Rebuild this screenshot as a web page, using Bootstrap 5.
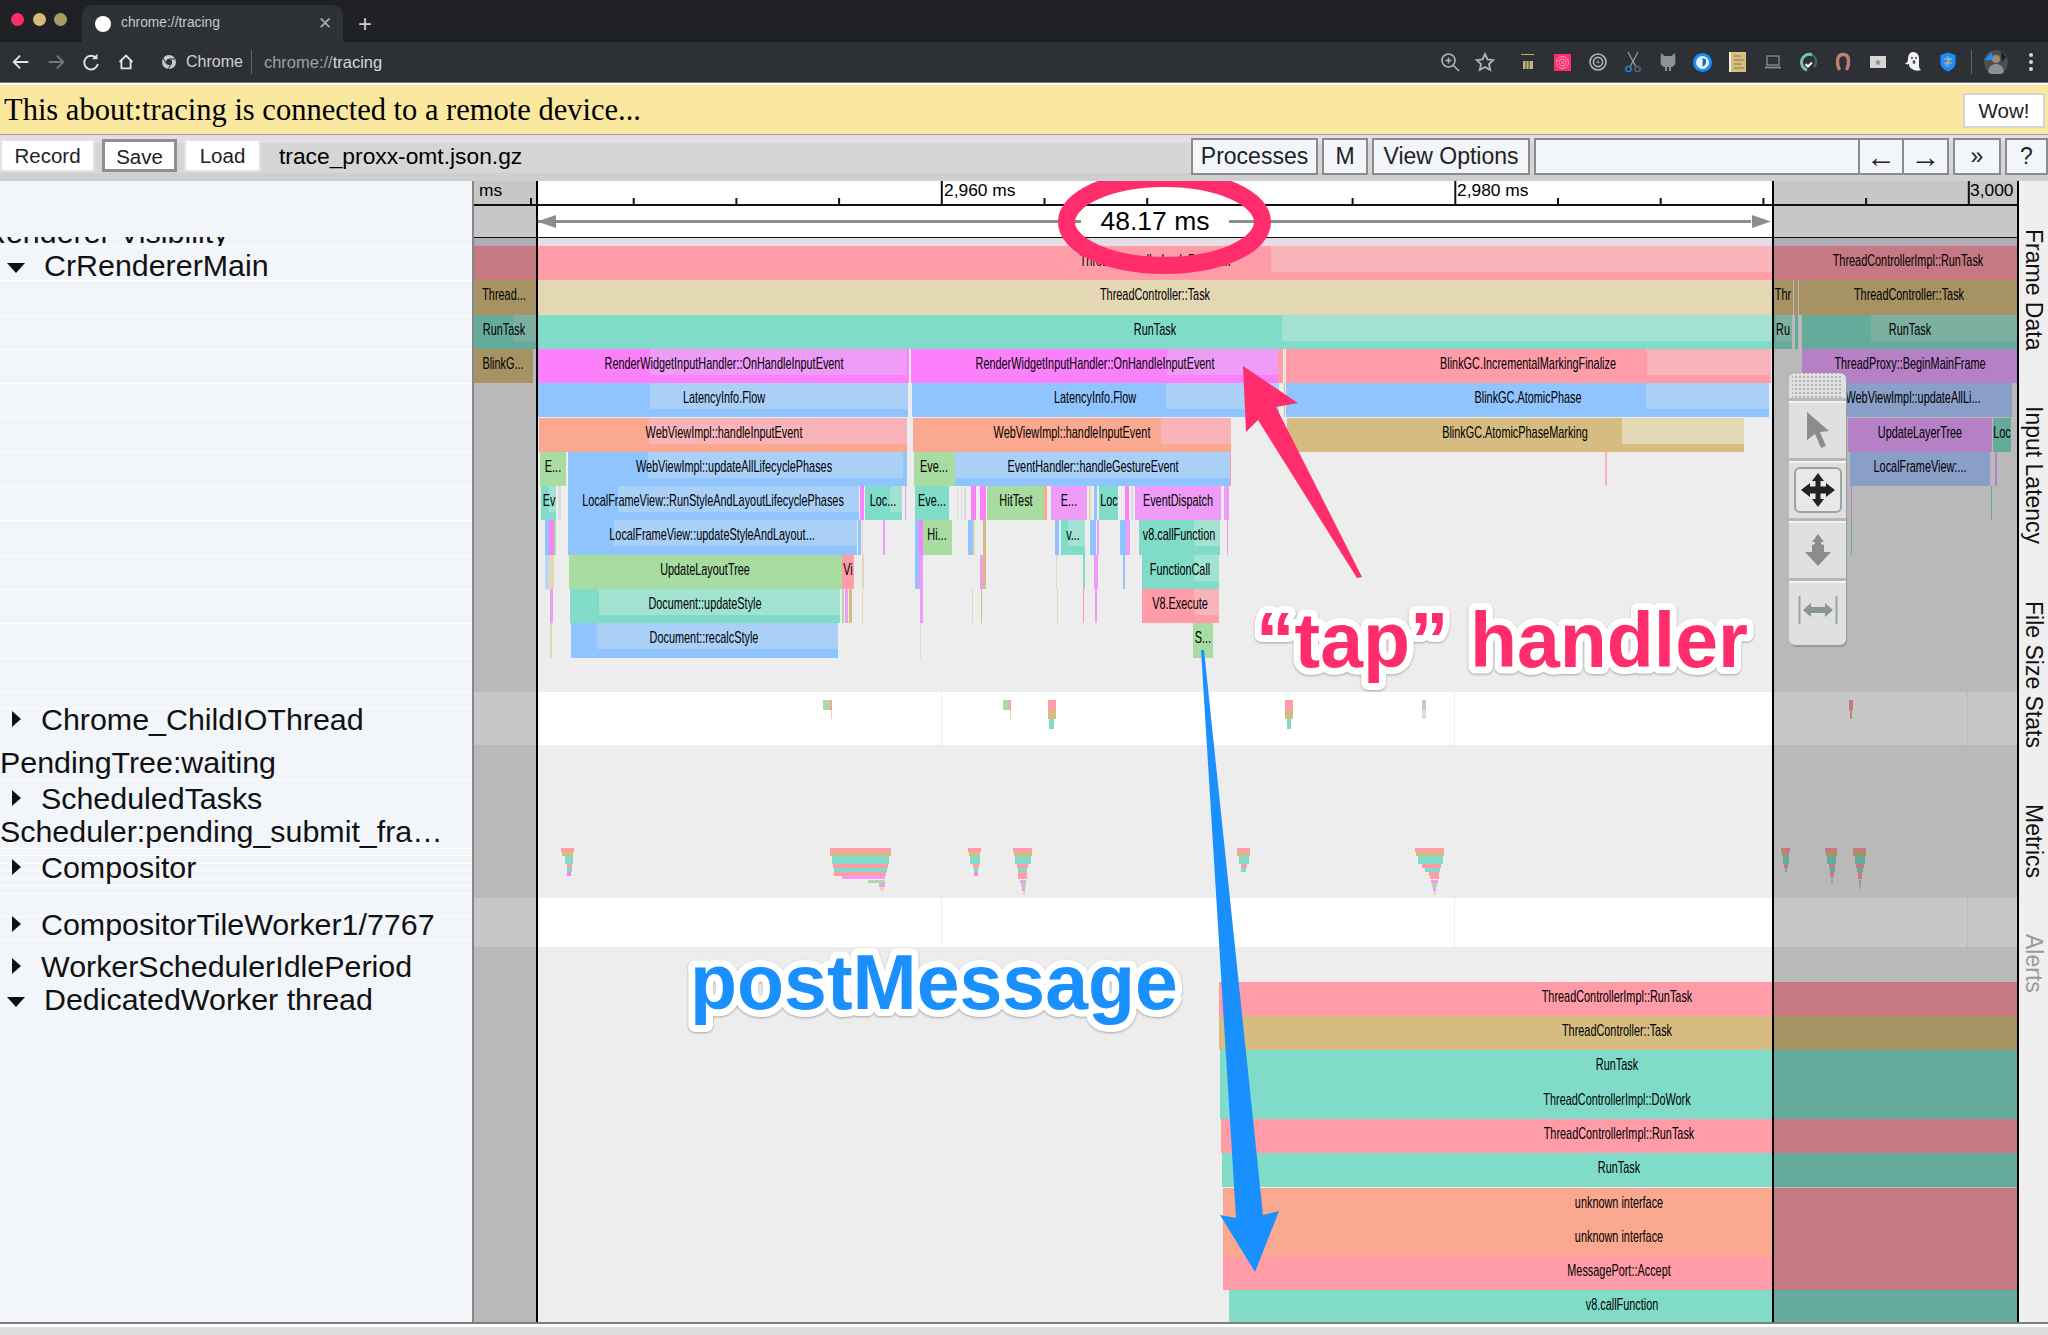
<!DOCTYPE html>
<html lang="en">
<head>
  <meta charset="UTF-8" />
  <title>chrome://tracing</title>
  <link href="https://cdn.jsdelivr.net/npm/bootstrap@5.3.3/dist/css/bootstrap.min.css" rel="stylesheet">
  <style>
    html, body { height: 100%; }
    body { margin: 0; width: 2048px; height: 1335px; overflow: hidden; font-family: "Liberation Sans", Arial, sans-serif; background: #ddd; color: #000; }

    /* browser chrome */
    .cr-tabs { height: 42px; background: #202124; }
    .cr-light { width: 13px; height: 13px; border-radius: 50%; margin-top: 13px; }
    .cr-l1 { background: #fb2f6a; margin-left: 11px; }
    .cr-l2 { background: #d6bc7a; margin-left: 9px; }
    .cr-l3 { background: #a89a6a; margin-left: 8px; }
    .cr-tab { width: 261px; height: 37px; margin-top: 5px; margin-left: 15px; background: #2e3135; border-radius: 10px 10px 0 0; color: #c8c8c8; font-size: 13.8px; padding-left: 13px; }
    .cr-fav { width: 16px; height: 16px; border-radius: 50%; background: #fff; margin-right: 10px; }
    .cr-close { margin-left: auto; margin-right: 11px; color: #aaa; font-size: 17px; }
    .cr-plus { margin: 5px 0 0 15px; color: #ccc; font-size: 24px; line-height: 37px; }
    .cr-bar { height: 41px; background: #2d3034; border-bottom: 1px solid #777; color: #d0d0d0; font-size: 16px; padding-left: 3px; }
    .cr-cell { width: 35px; height: 40px; flex: none; }
    .cr-sep { width: 1px; height: 24px; background: #666; }
    .cr-gap { margin: 0 6px; }
    .cr-logo { margin-left: 8px; }
    .cr-url { color: #a0a0a0; font-size: 16.5px; }
    .cr-url b { color: #d8d8d8; font-weight: 400; }
    .cr-spacer { height: 2px; background: #fff; }

    /* about:tracing */
    .tv-note { height: 50px; background: #fbe89f; border-bottom: 1px solid #9e9e9e; padding: 0 3px 0 4px; font-family: "Liberation Serif", "Times New Roman", serif; font-size: 30.5px; }
    .tv-note-text { margin-top: 2px; line-height: 46px; }
    .tv-wow { width: 82px; height: 35px; padding: 0; border-radius: 0; background: #fff; border: 2px solid #d4d4d4; font: 20.5px "Liberation Sans", Arial, sans-serif; color: #222; margin-top: 8px; }
    .tv-tools { height: 46px; background: linear-gradient(#e6dce6 0 8px, #d6d6d6 8px 38px, #cfcfcf 38px); }
    .tv-btn { height: 33px; padding: 0; border-radius: 0; background: #fff; border: 2px solid #e2e2e2; font-size: 20.5px; color: #222; margin-top: 4px; margin-left: 7px; }
    .tv-btn:first-child { margin-left: 0; }
    .tv-btn:hover, .tv-btn2:hover { background: #fff; color: #222; }
    .tv-save { border: 3px solid #8f8f8f; }
    .tv-file { font-size: 22.8px; margin: 3px 0 0 18px; line-height: 36px; }
    .tv-btn2 { height: 37px; padding: 0; border-radius: 0; background: #f2f5f9; border: 2px solid #8b8b8b; font-size: 23px; color: #222; margin-top: 3px; line-height: 1; }
    .input-group .form-control.tv-search { height: 37px; width: 326px; flex: none; border-radius: 0; background: #f2f5f9; border: 2px solid #8b8b8b; margin-top: 3px; }
    .input-group .tv-btn2 { border-left-width: 1px; border-radius: 0; }
    .tv-arrow { font-size: 30px; font-weight: 700; line-height: 30px; }
    .w-95 { width: 95px; } .w-75b { width: 75px; } .w-77 { width: 77px; } .w-127 { width: 127px; } .w-46 { width: 46px; } .w-158 { width: 158px; } .w-45 { width: 45px; } .w-48 { width: 48px; } .w-43 { width: 43px; }

    .tv-main { height: 1141px; }
    .tv-side { width: 472px; flex: none; background: #f2f5f9; overflow: hidden; padding-top: 56px; }
    .tv-track { display: flow-root; font-size: 30.4px; line-height: 34px; white-space: nowrap; color: #111; }
    .tv-line { border-top: 1px solid #fff; }
    .tv-clip { overflow: hidden; }
    .tv-shift { margin-left: -16px; }
    .tv-lined { background: repeating-linear-gradient(#fff 0 1px, transparent 1px 34.3px); }
    .tv-lined2 { background: repeating-linear-gradient(#fff 0 1px, transparent 1px 7.45px); }
    .tv-tri-r { width: 0; height: 0; border-left: 9px solid #111; border-top: 8.5px solid transparent; border-bottom: 8.5px solid transparent; margin: 0 20px 0 12px; }
    .tv-tri-d { width: 0; height: 0; border-top: 10px solid #111; border-left: 9px solid transparent; border-right: 9px solid transparent; margin: 6px 19px 0 7px; }

    .tv-canvas { width: 1545px; flex: none; overflow: hidden; background: #ededed; }
    .tv-el { position: absolute; }
    .tv-base { z-index: 0; }
    .tv-fbar { z-index: 1; }
    .tv-hl { z-index: 1; }
    .tv-lab { position: absolute; z-index: 2; line-height: 29px; font-size: 17px; white-space: nowrap; color: #000; transform: translateX(-50%) scaleX(.64); }
    .tv-dim { background: rgba(0, 0, 0, .22); z-index: 3; }
    .tv-rule { z-index: 3; }
    .tv-art { position: absolute; left: 0; top: 0; z-index: 4; }
    .tv-art text { font-family: "Liberation Sans", Arial, sans-serif; }
    .tv-big { font-size: 77px; font-weight: 700; paint-order: stroke; stroke: #fff; stroke-width: 14px; stroke-linejoin: round; filter: drop-shadow(0 1px 1px rgba(0, 0, 0, .3)); }

    /* floating mouse mode selector */
    .tv-mode { position: absolute; z-index: 5; left: 1317px; top: 192px; width: 57px; height: 272px; background: #e0e0e0; border-radius: 6px; box-shadow: 1px 2px 1px #999; }
    .tv-grip { height: 25px; margin: 0 3px; background-image: radial-gradient(#b0b0b0 .8px, transparent 1px); background-size: 4px 4px; background-position: 2px 6px; }
    .tv-mode-cell { height: 60px; border-top: 3px solid #b8b8b8; box-shadow: inset 0 2px 0 #f4f4f4; }
    .tv-mode-on { width: 48px; height: 46px; border: 2px solid #9aa69f; border-radius: 6px; background: #e8e8e8; }

    .tv-tabs { width: 31px; flex: none; background: #efefef; border-left: 2px solid #000; padding-top: 48px; gap: 56px; font-size: 23px; line-height: 29px; }
    .tv-tabs span { writing-mode: vertical-rl; white-space: nowrap; color: #111; }
    .tv-tabs .tv-off { color: #999; }
    .tv-foot { height: 13px; background: linear-gradient(#7f7f7f 0 2px, #fff 2px 5px, #ddd 5px); }
  </style>
</head>
<body>

  <div class="cr-tabs d-flex align-items-start">
    <div class="cr-light cr-l1"></div>
    <div class="cr-light cr-l2"></div>
    <div class="cr-light cr-l3"></div>
    <div class="cr-tab d-flex align-items-center">
      <span class="cr-fav"></span>chrome://tracing<span class="cr-close">&#10005;</span>
    </div>
    <div class="cr-plus">+</div>
  </div>

  <div class="cr-bar d-flex align-items-center">
    <div class="cr-cell d-flex align-items-center justify-content-center"><svg width="22" height="22" viewBox="0 0 24 24" fill="none" stroke="#e4e4e4" stroke-width="2"><path d="M20 12H5M11 5l-7 7 7 7"/></svg></div>
    <div class="cr-cell d-flex align-items-center justify-content-center"><svg width="22" height="22" viewBox="0 0 24 24" fill="none" stroke="#777" stroke-width="2"><path d="M4 12h15M13 5l7 7-7 7"/></svg></div>
    <div class="cr-cell d-flex align-items-center justify-content-center"><svg width="22" height="22" viewBox="0 0 24 24" fill="none" stroke="#e4e4e4" stroke-width="2"><path d="M18 8a7.5 7.5 0 1 0 1.5 6"/><path d="M19 3v6h-6" fill="#e4e4e4" stroke="none"/></svg></div>
    <div class="cr-cell d-flex align-items-center justify-content-center"><svg width="22" height="22" viewBox="0 0 24 24" fill="none" stroke="#e4e4e4" stroke-width="2"><path d="M5 12l7-7 7 7M7 11v8h10v-8"/></svg></div>
    <div class="cr-cell cr-logo d-flex align-items-center justify-content-center"><svg width="16" height="16" viewBox="0 0 16 16"><circle cx="8" cy="8" r="7" fill="#c8c8c8"/><circle cx="8" cy="8" r="3" fill="#2d3034"/><path d="M8 5h6M5 9.5 2 4M10.5 9.5 7 15" stroke="#2d3034" stroke-width="1"/></svg></div>
    <span>Chrome</span>
    <span class="cr-sep ms-2"></span>
    <span class="cr-url ms-2 ps-1">chrome://<b>tracing</b></span>

    <div class="ms-auto d-flex align-items-center">
      <div class="cr-cell d-flex align-items-center justify-content-center"><svg width="22" height="22" viewBox="0 0 22 22" fill="none" stroke="#b4b4b4" stroke-width="1.6"><circle cx="9.5" cy="9.5" r="6.5"/><path d="M14 14l6 6M9.5 6.5v6M6.5 9.5h6"/></svg></div>
      <div class="cr-cell d-flex align-items-center justify-content-center"><svg width="22" height="22" viewBox="0 0 22 22" fill="none" stroke="#b4b4b4" stroke-width="1.8"><path d="M11 3l2.5 5.4 5.8.7-4.3 4 1.2 5.8L11 16l-5.2 2.9L7 13.1l-4.3-4 5.8-.7z"/></svg></div>
      <div class="cr-cell d-flex align-items-center justify-content-center ms-2"><svg width="20" height="20" viewBox="0 0 20 20"><path d="M3 2h13v1H3z" fill="#c9ad70"/><rect x="5" y="9" width="10" height="8" fill="#c9b27a"/><path d="M8 9v8M11 9v8" stroke="#2d3034" stroke-width=".8"/></svg></div>
      <div class="cr-cell d-flex align-items-center justify-content-center"><svg width="17" height="17" viewBox="0 0 17 17" fill="none"><rect width="17" height="17" fill="#ff2d6b"/><circle cx="8.5" cy="8.5" r="6" stroke="#ffb0c4" stroke-width=".9"/><circle cx="8.5" cy="8.5" r="3.5" stroke="#ffb0c4" stroke-width=".9"/><circle cx="8.5" cy="8.5" r="1" stroke="#ffb0c4" stroke-width=".9"/></svg></div>
      <div class="cr-cell d-flex align-items-center justify-content-center"><svg width="20" height="20" viewBox="0 0 20 20" fill="none" stroke="#b4b4b4"><circle cx="10" cy="10" r="8" stroke-width="1.6"/><circle cx="10" cy="10" r="4.6" stroke-width="1.6"/><circle cx="10" cy="10" r="1.5" fill="#888" stroke="none"/></svg></div>
      <div class="cr-cell d-flex align-items-center justify-content-center"><svg width="18" height="22" viewBox="0 0 18 22" fill="none"><path d="M4 1l8 15M14 1L6 16" stroke="#9a9a9a" stroke-width="1.3"/><circle cx="4.5" cy="18" r="2.6" stroke="#2a86d8" stroke-width="1.4"/><circle cx="13.5" cy="18" r="2.6" stroke="#4a6a88" stroke-width="1.4"/></svg></div>
      <div class="cr-cell d-flex align-items-center justify-content-center"><svg width="18" height="20" viewBox="0 0 18 20"><path d="M2 1l3.5 3h7L16 1l.5 9c0 3-2.5 5-4.5 5v4h-2v-4H8v4H6v-4c-2 0-4.5-2-4.5-5z" fill="#8d9392"/></svg></div>
      <div class="cr-cell d-flex align-items-center justify-content-center"><svg width="19" height="19" viewBox="0 0 19 19"><circle cx="9.5" cy="9.5" r="9.5" fill="#1a8cff"/><circle cx="9.5" cy="9.5" r="6.5" fill="#e8f2fb"/><path d="M9.5 5l3.5 1.3v3c0 2-1.5 3.5-3.5 4.5z" fill="#1a6fc4"/></svg></div>
      <div class="cr-cell d-flex align-items-center justify-content-center"><svg width="18" height="20" viewBox="0 0 18 20"><rect width="2" height="20" fill="#eee"/><rect x="2" width="15" height="20" fill="#d8bf80"/><path d="M5 4h7M5 8h10M5 12h8M5 16h10" stroke="#8a7a4c" stroke-width="1"/></svg></div>
      <div class="cr-cell d-flex align-items-center justify-content-center"><svg width="18" height="16" viewBox="0 0 18 16" fill="none" stroke="#8c8c8c"><rect x="3" y="2" width="12" height="9" stroke-width="1.3"/><path d="M1 13.5h16" stroke-width="1.8"/></svg></div>
      <div class="cr-cell d-flex align-items-center justify-content-center"><svg width="20" height="20" viewBox="0 0 20 20" fill="none"><path d="M14 2.7A8 8 0 1 0 9 18" stroke="#7cc5a4" stroke-width="3"/><path d="M14.5 2.8A8 8 0 0 1 16 15" stroke="#3a6d66" stroke-width="2"/><path d="M7.5 12l2.5 2.5 4-4" stroke="#fff" stroke-width="2"/></svg></div>
      <div class="cr-cell d-flex align-items-center justify-content-center"><svg width="18" height="20" viewBox="0 0 18 20" fill="none"><path d="M5.500 18C2.500 12 2 3 9 2.500S15.500 12 12.500 18" stroke="#c37c78" stroke-width="3.4"/></svg></div>
      <div class="cr-cell d-flex align-items-center justify-content-center"><svg width="16" height="12" viewBox="0 0 16 12"><rect width="16" height="12" fill="#d9d5d5"/><path d="M8 3l1 2.2 2.3.2-1.7 1.5.5 2.3L8 8l-2.1 1.2.5-2.3-1.7-1.5L7 5.2z" fill="#8f8f8f"/></svg></div>
      <div class="cr-cell d-flex align-items-center justify-content-center"><svg width="18" height="22" viewBox="0 0 18 22"><path d="M9 1c4 0 6 3 6 7v7c0 2 1 3 2 4-3 1-6 1-9-1-2-1-3-3-3-5-2 1-3 0-4-1 2 0 3-1 3-4 0-4 2-7 5-7z" fill="#f4f4f4"/><circle cx="8" cy="7" r="1" fill="#333"/><circle cx="12" cy="7" r="1" fill="#333"/><ellipse cx="10" cy="11" rx="1.5" ry="2" fill="#555"/></svg></div>
      <div class="cr-cell d-flex align-items-center justify-content-center"><svg width="16" height="20" viewBox="0 0 16 20"><path d="M8 .5L15.5 3v8c0 4-3.5 7-7.5 8.500C4 18 .5 15 .5 11V3z" fill="#1a8cff"/><path d="M4 7h8M3.5 11h9M8 4v11M5 14l6-8" stroke="#d8b870" stroke-width="1"/></svg></div>
      <span class="cr-sep cr-gap"></span>
      <div class="cr-cell d-flex align-items-center justify-content-center"><svg width="24" height="24" viewBox="0 0 24 24"><circle cx="12" cy="12" r="12" fill="#4e4e4e"/><path d="M0 10l8-8 1 8z" fill="#1a8cff"/><circle cx="12" cy="9" r="4" fill="#9c8b7a"/><path d="M4 22c1-6 4-8 8-8s7 2 8 8a12 12 0 0 1-16 0z" fill="#8c9294"/><path d="M17 1l5 6-4 5z" fill="#1c1c1c"/></svg></div>
      <div class="cr-cell d-flex align-items-center justify-content-center"><svg width="6" height="20" viewBox="0 0 6 20" fill="#d8d8d8"><circle cx="3" cy="3" r="2"/><circle cx="3" cy="10" r="2"/><circle cx="3" cy="17" r="2"/></svg></div>
    </div>
  </div>
  <div class="cr-spacer"></div>

  <div class="tv-note d-flex justify-content-between align-items-start">
    <span class="tv-note-text">This about:tracing is connected to a remote device...</span>
    <button class="btn tv-wow" type="button">Wow!</button>
  </div>

  <div class="tv-tools d-flex align-items-start">
    <button class="btn tv-btn w-95" type="button">Record</button>
    <button class="btn tv-btn tv-save w-75b" type="button">Save</button>
    <button class="btn tv-btn w-77" type="button">Load</button>
    <span class="tv-file">trace_proxx-omt.json.gz</span>
    <div class="ms-auto d-flex align-items-start gap-1">
      <button class="btn tv-btn2 w-127" type="button">Processes</button>
      <button class="btn tv-btn2 w-46" type="button">M</button>
      <button class="btn tv-btn2 w-158" type="button">View Options</button>
      <div class="input-group flex-nowrap w-auto">
        <input class="form-control tv-search" type="text" aria-label="Find">
        <button class="btn tv-btn2 tv-arrow w-45" type="button">&#8592;</button>
        <button class="btn tv-btn2 tv-arrow w-46" type="button">&#8594;</button>
      </div>
      <button class="btn tv-btn2 w-48" type="button">&raquo;</button>
      <button class="btn tv-btn2 w-43" type="button">?</button>
    </div>
  </div>

  <div class="tv-main d-flex">
    <div class="tv-side" id="side"></div>

    <div class="tv-canvas position-relative" id="canvas">
      <svg class="tv-art" id="art" width="1545" height="1141" viewBox="472 181 1545 1141">
        <g id="rulerMarks"></g>
        <g fill="#8c8c8c">
          <path d="M538 220h543v3H538zM1229 220h522v3h-522z"/>
          <path d="M537 221.5l19-6.5v13zM1771 221.5l-19-6.5v13z"/>
        </g>
        <text x="1155" y="230" text-anchor="middle" font-size="26.5">48.17 ms</text>

        <ellipse cx="1164.5" cy="222" rx="98" ry="43.5" fill="none" stroke="#ff2d6b" stroke-width="17"/>
        <path d="M1243 366l55 37-22 4 86 170-5 1-99-158-12 12z" fill="#ff2d6b"/>
        <path d="M1201 650h3l59 565 16-4-24 61-35-57 16 3z" fill="#1a90ff"/>
        <text class="tv-big" x="1256" y="667" fill="#ff2d6b">“tap” handler</text>
        <text class="tv-big" x="690" y="1009" fill="#1a90ff">postMessage</text>
      </svg>

      <div class="tv-mode d-flex flex-column">
        <div class="tv-grip"></div>
        <div class="tv-mode-cell d-flex align-items-center justify-content-center">
          <svg width="26" height="38" viewBox="0 0 26 38"><path d="M2 1l22 19-9 1 6 14-5 2-6-14-8 6z" fill="#8c8c8c"/></svg>
        </div>
        <div class="tv-mode-cell d-flex align-items-center justify-content-center">
          <div class="tv-mode-on d-flex align-items-center justify-content-center">
            <svg width="36" height="36" viewBox="0 0 36 36"><path d="M18 1l6 8h-3.500v5.500H26V11l9 7-9 7v-3.500h-5.500V27H24l-6 8-6-8h3.500v-5.500H10V25l-9-7 9-7v3.500h5.500V9H12z" fill="#222"/></svg>
          </div>
        </div>
        <div class="tv-mode-cell d-flex align-items-center justify-content-center">
          <svg width="26" height="34" viewBox="0 0 26 34"><path d="M13 1l6 8h-3v2l3 1v7h7l-13 14L0 19h7v-7l3-1V9H7z" fill="#8c8c8c"/></svg>
        </div>
        <div class="tv-mode-cell d-flex align-items-center justify-content-center">
          <svg width="40" height="30" viewBox="0 0 40 30"><path d="M1.5 1v28M38.5 1v28" stroke="#9aa69f" stroke-width="2"/><path d="M5 15l8-7v4h14V8l8 7-8 7v-4H13v4z" fill="#8c948f"/></svg>
        </div>
      </div>
    </div>

    <div class="tv-tabs d-flex flex-column align-items-center">
      <span>Frame Data</span>
      <span>Input Latency</span>
      <span>File Size Stats</span>
      <span>Metrics</span>
      <span class="tv-off">Alerts</span>
    </div>
  </div>
  <div class="tv-foot"></div>

  <script src="https://cdn.jsdelivr.net/npm/bootstrap@5.3.3/dist/js/bootstrap.bundle.min.js"></script>
  <script>
    // colours of the slices
    const P = '#ff9ca8', T = '#d6bc80', TL = '#e4d8b4', C = '#80dcc8', M = '#fc80fc', ML = '#ee9cf8',
          B = '#90c4fe', O = '#faa890', G = '#a8dca0', V = '#e9a4fe', I = '#b0ccff';
    const HL = { [P]: '#f9b4ba', [T]: TL, [C]: '#a2e2d0', [M]: ML, [B]: '#aad0f8', [O]: '#f9b4ba', [ML]: ML };

    const canvas = document.getElementById('canvas');
    const art = document.getElementById('art');
    function box(cls, x1, y1, x2, y2, color) {
      const d = document.createElement('div');
      d.className = 'tv-el ' + cls;
      d.style.left = (x1 - 472) + 'px';
      d.style.top = (y1 - 181) + 'px';
      d.style.width = (x2 - x1) + 'px';
      d.style.height = (y2 - y1) + 'px';
      if (color) d.style.background = color;
      canvas.insertBefore(d, art);
      return d;
    }

    // backgrounds of the ruler and white process rows
    box('tv-base', 472, 181, 2017, 237, '#fff');
    box('tv-base', 472, 238, 2017, 246, '#e6dce6');
    [[692, 745], [898, 947]].forEach(r => {
      box('tv-base', 472, r[0], 2017, r[1], '#fff');
      [941, 1454, 1967].forEach(x => box('tv-base', x, r[0], x + 1, r[1], '#eee'));
    });

    // [row, x1, x2, colour, label, label centre, highlight x1, highlight x2]
    const rowsTop = 246, rowH = 34.3;
    const slices = [
      [0, 472, 1773, P, 'ThreadControllerImpl::RunTask', 1155, 1271, 1773],
      [1, 472, 536, T, 'Thread...', 504],
      [1, 536, 1773, TL, 'ThreadController::Task', 1155],
      [2, 472, 536, C, 'RunTask', 504, 513, 536],
      [2, 536, 1773, C, 'RunTask', 1155, 1282, 1773],
      [3, 472, 533, T, 'BlinkG...', 503],
      [3, 538, 909, M, 'RenderWidgetInputHandler::OnHandleInputEvent', 723.5, 650, 907],
      [3, 911, 1278, M, 'RenderWidgetInputHandler::OnHandleInputEvent', 1094.5, 1167, 1278],
      [3, 1278, 1283, P], [3, 1284, 1285, TL],
      [3, 1286, 1771, P, 'BlinkGC.IncrementalMarkingFinalize', 1527.5, 1647, 1771],
      [4, 538, 908, B, 'LatencyInfo.Flow', 723.5, 650, 908],
      [4, 912, 1279, B, 'LatencyInfo.Flow', 1094.5, 1166, 1279],
      [4, 1284, 1285, T],
      [4, 1286, 1769, B, 'BlinkGC.AtomicPhase', 1527.5, 1646, 1769],
      [5, 539, 907, O, 'WebViewImpl::handleInputEvent', 723.5, 648.5, 907],
      [5, 913, 1231, O, 'WebViewImpl::handleInputEvent', 1072, 1161, 1231],
      [5, 1287, 1744, T, 'BlinkGC.AtomicPhaseMarking', 1515, 1622, 1744],
      [6, 540, 566, G, 'E...', 553],
      [6, 568, 907, B, 'WebViewImpl::updateAllLifecyclePhases', 734, 648, 903],
      [6, 914, 955, G, 'Eve...', 934],
      [6, 955, 1230, B, 'EventHandler::handleGestureEvent', 1092.5, 955, 1230],
      [6, 1230, 1231, P], [6, 1605, 1607, '#f9b4ba'],
      [7, 541, 556, C, 'Ev', 548.5, 549, 556],
      [7, 558, 561, '#ddd'],
      [7, 568, 859, B, 'LocalFrameView::RunStyleAndLayoutLifecyclePhases', 713, 618, 859],
      [7, 860, 864, M], [7, 865, 902, C, 'Loc...', 883, 890, 902], [7, 905, 906, ML],
      [7, 915, 949, C, 'Eve...', 932],
      [7, 957, 958, '#ddd'], [7, 961, 962, '#ddd'], [7, 964, 966, '#ddd'], [7, 971, 976, M], [7, 980, 986, M],
      [7, 987, 1043.5, G, 'HitTest', 1016], [7, 1044, 1047, O],
      [7, 1050.5, 1087, ML, 'E...', 1069], [7, 1089, 1091, TL], [7, 1094, 1097, B], [7, 1099, 1118, C, 'Loc', 1108.5],
      [7, 1125, 1129, M], [7, 1131, 1133, '#ddd'], [7, 1135, 1221, ML, 'EventDispatch', 1178], [7, 1224, 1229, ML],
      [8, 544.5, 549, B], [8, 549, 554, M], [8, 554, 556, G],
      [8, 568, 857, B, 'LocalFrameView::updateStyleAndLayout...', 712, 614, 857],
      [8, 858, 861, B], [8, 862, 863, TL], [8, 883, 885, ML],
      [8, 915, 919, B], [8, 919, 923, M], [8, 923, 951.5, G, 'Hi...', 937],
      [8, 967.5, 972.5, B], [8, 972.5, 975, TL], [8, 983, 986, T],
      [8, 1055, 1059, B], [8, 1061, 1085, C, 'v...', 1073, 1068, 1085],
      [8, 1090, 1096, B], [8, 1097, 1099, ML], [8, 1120, 1126, B], [8, 1126, 1130, ML],
      [8, 1139, 1220, C, 'v8.callFunction', 1179, 1193.5, 1220], [8, 1227, 1228, ML],
      [9, 544.5, 549, '#b8d8f8'], [9, 549, 554, TL],
      [9, 569, 841.5, G, 'UpdateLayoutTree', 705],
      [9, 842, 853.5, P, 'Vi', 848], [9, 862, 864, TL],
      [9, 915, 919, B], [9, 919, 923, ML], [9, 980, 983, ML], [9, 983, 986, T],
      [9, 1056, 1057, TL], [9, 1083, 1085, C], [9, 1094, 1098, ML], [9, 1123, 1125, B],
      [9, 1141.5, 1219, C, 'FunctionCall', 1180, 1193.5, 1219],
      [10, 550, 553, ML],
      [10, 570, 840, C, 'Document::updateStyle', 705, 599, 840],
      [10, 842, 844, G], [10, 845, 848, ML], [10, 849, 852, T],
      [10, 920, 923, ML], [10, 972, 973, TL], [10, 981, 982, T], [10, 1057, 1058, TL], [10, 1083, 1084, P], [10, 1095, 1097, ML],
      [10, 1142, 1218.5, P, 'V8.Execute', 1180, 1193.5, 1218.5],
      [10, 862, 863, TL],
      [11, 550, 552, TL],
      [11, 570.5, 838, B, 'Document::recalcStyle', 704, 597, 838],
      [11, 920, 921, TL],
      [11, 1193, 1213, G, 'S...', 1203],

      // right of the selection
      [1, 1774, 1793, T, 'Thr', 1783], [1, 1794, 1798, T], [1, 1799, 2017, T, 'ThreadController::Task', 1909],
      [2, 1774, 1792, C, 'Ru', 1783, 1776, 1792], [2, 1795, 1798, C], [2, 1802, 2017, C, 'RunTask', 1910, 1871, 2017],
      [0, 1773, 2017, P, 'ThreadControllerImpl::RunTask', 1907.5],
      [3, 1802, 2017, V, 'ThreadProxy::BeginMainFrame', 1910],
      [4, 1815, 2012, I, 'WebViewImpl::updateAllLi...', 1913],
      [5, 1848, 1991.5, V, 'UpdateLayerTree', 1920], [5, 1992.5, 2011, C, 'Loc', 2002],
      [6, 1850, 1990, I, 'LocalFrameView:...', 1920], [6, 1995, 1997, V],
      [7, 1851, 1852, V], [8, 1851, 1852, C], [7, 1991, 1992, C],
    ];

    function slice(y, s) {
      const [, x1, x2, col, label, cx, h1, h2] = s;
      box('tv-fbar', x1, y, x2, y + rowH, col);
      if (h1) box('tv-hl', h1, y, h2, y + 26, HL[col]);
      if (label) {
        const l = box('tv-lab', cx, y, cx, y + 26);
        l.style.width = 'auto';
        l.style.height = 'auto';
        l.textContent = label;
      }
    }
    slices.forEach(s => slice(rowsTop + s[0] * rowH, s));

    // dedicated worker stack
    const workerTop = 981.7;
    [[1218.7, P, 'ThreadControllerImpl::RunTask', 1617], [1218.7, T, 'ThreadController::Task', 1617], [1220.4, C, 'RunTask', 1617],
     [1220.4, C, 'ThreadControllerImpl::DoWork', 1617], [1221, P, 'ThreadControllerImpl::RunTask', 1618.5], [1221.6, C, 'RunTask', 1619],
     [1222.7, O, 'unknown interface', 1619], [1222.7, O, 'unknown interface', 1619], [1223, P, 'MessagePort::Accept', 1619],
     [1228.5, C, 'v8.callFunction', 1622]].forEach((w, i) => {
      slice(workerTop + i * rowH, [0, w[0], 2017, w[1], w[2], w[3]]);
    });
    box('tv-hl', 1773, workerTop + 6 * rowH, 2017, workerTop + 8 * rowH, P);

    // small flames on the compositor row, one [x1, x2, colour] per level
    const flames = [
      [[561, 574, P], [562, 573, T], [565, 573, C], [565, 573, C], [567, 572, P], [567, 572, C], [567, 571, M]],
      [[830, 890.5, P], [830, 890.5, T], [832, 889, C], [832, 889, C], [832.5, 888, P], [834, 887, C], [834, 886, P], [842, 885, ML], [868, 885, G], [879, 885, ML], [880, 884, TL]],
      [[968, 981, P], [969, 980, T], [970, 980, C], [970, 980, C], [973, 979, P], [974, 978, C], [974, 978, M]],
      [[1013, 1032, P], [1014, 1032, T], [1015, 1031, C], [1015, 1031, C], [1017, 1028, P], [1018, 1027, C], [1018, 1027, P], [1018, 1027, P], [1020, 1026, ML], [1021, 1026, G], [1022, 1025, ML], [1023, 1025, TL]],
      [[1237, 1250, P], [1237, 1250, T], [1239, 1249, C], [1239, 1249, C], [1241, 1247, P], [1241, 1246, C]],
      [[1415, 1444, P], [1416, 1444, T], [1418, 1443, C], [1418, 1443, C], [1422, 1441, P], [1425, 1440, C], [1429, 1439, P], [1430, 1439, P], [1431, 1438, ML], [1432, 1437, G], [1433, 1436, ML], [1434, 1436, TL]],
      [[1781, 1790, P], [1782, 1789, T], [1783, 1789, C], [1783, 1789, C], [1784, 1788, P], [1785, 1787, C]],
      [[1825, 1837, P], [1826, 1837, T], [1827, 1836, C], [1827, 1836, C], [1829, 1835, P], [1830, 1835, C], [1830, 1834, P], [1831, 1833, ML], [1831, 1833, G]],
      [[1853, 1866, P], [1853, 1866, T], [1855, 1865, C], [1855, 1865, C], [1856, 1864, P], [1857, 1863, C], [1858, 1862, P], [1858, 1862, P], [1859, 1861, ML], [1859, 1861, G], [1860, 1861, TL]],
    ];
    flames.forEach(f => f.forEach((r, i) => box('tv-fbar', r[0], 848.3 + i * 3.9, r[1], 848.3 + (i + 1) * 3.9, r[2])));

    // marks on the Chrome_ChildIOThread row
    [[823, 830, 0, G], [830, 832, 0, P], [831, 832, 1, TL],
     [1003, 1009, 0, G], [1009, 1011, 0, P], [1010, 1011, 1, TL],
     [1048, 1056, 0, P], [1048, 1056, 1, T], [1049, 1054, 2, C],
     [1285, 1293, 0, P], [1285, 1293, 1, T], [1287, 1291, 2, C],
     [1422, 1426, 0, G], [1422, 1426, 1, '#ddd'],
     [1849, 1853, 0, P], [1850, 1852, 1, T]].forEach(m => {
      box('tv-fbar', m[0], 700 + m[2] * 9.6, m[1], 700 + (m[2] + 1) * 9.6, m[3]);
    });

    // out of selection shade and the selection borders go over the slices
    box('tv-dim', 472, 181, 536, 1322);
    box('tv-dim', 1773, 181, 2017, 1322);
    box('tv-rule', 472, 181, 474, 1322, '#888');
    box('tv-rule', 536, 181, 538, 1322, '#000');
    box('tv-rule', 1772, 181, 1774, 1322, '#000');
    box('tv-rule', 474, 204, 2017, 206, '#111');
    box('tv-rule', 474, 237, 2017, 238, '#111');

    // ruler ticks and labels
    const ns = 'http://www.w3.org/2000/svg';
    const marks = document.getElementById('rulerMarks');
    function mark(tag, attrs, txt) {
      const e = document.createElementNS(ns, tag);
      Object.keys(attrs).forEach(k => e.setAttribute(k, attrs[k]));
      if (txt) e.textContent = txt;
      marks.appendChild(e);
    }
    for (let i = 0; i < 15; i++) {
      const x = 530 + i * 102.7;
      const major = i % 5 === 4;
      if (x < 2017) mark('rect', { x: x, y: major ? 181 : 198, width: 2, height: major ? 23 : 6, fill: '#111' });
    }
    [['ms', 479], ['2,960 ms', 944], ['2,980 ms', 1457], ['3,000', 1970]].forEach(l => {
      mark('text', { x: l[1], y: 196, 'font-size': 17.4 }, l[0]);
    });

    // track labels on the left: [height, label, arrow, label offset, extra class]
    const tracks = [
      [9, 'Renderer Visibility', '', -22.5, 'tv-clip', 'tv-shift'],
      [462.3, 'CrRendererMain', 'd', 1.7, 'tv-lined'],
      [35, 'Chrome_ChildIOThread', 'r', -7.7, 'tv-line'],
      [36, 'PendingTree:waiting', '', 2.1, ''],
      [40, 'ScheduledTasks', 'r', 1.1, 'tv-line'],
      [29, 'Scheduler:pending_submit_fra…', '', -5.2, ''],
      [44.7, 'Compositor', 'r', 2.1, 'tv-lined2'],
      [23, '', '', 0, 'tv-line'],
      [23.3, 'CompositorTileWorker1/7767', 'r', -9.6, 'tv-line'],
      [44, 'WorkerSchedulerIdlePeriod', 'r', 8.8, 'tv-line'],
      [60, 'DedicatedWorker thread', 'd', -0.9, ''],
    ];
    const side = document.getElementById('side');
    tracks.forEach(t => {
      const row = document.createElement('div');
      row.className = 'tv-track ' + t[4];
      row.style.height = t[0] + 'px';
      const inner = document.createElement('div');
      inner.className = 'd-flex align-items-center ' + (t[5] || '');
      inner.style.height = '34px';
      inner.style.marginTop = t[3] + 'px';
      if (t[2]) {
        const a = document.createElement('span');
        a.className = t[2] === 'd' ? 'tv-tri-d' : 'tv-tri-r';
        inner.appendChild(a);
      }
      inner.appendChild(document.createTextNode(t[1]));
      row.appendChild(inner);
      side.appendChild(row);
    });
  </script>
</body>
</html>
